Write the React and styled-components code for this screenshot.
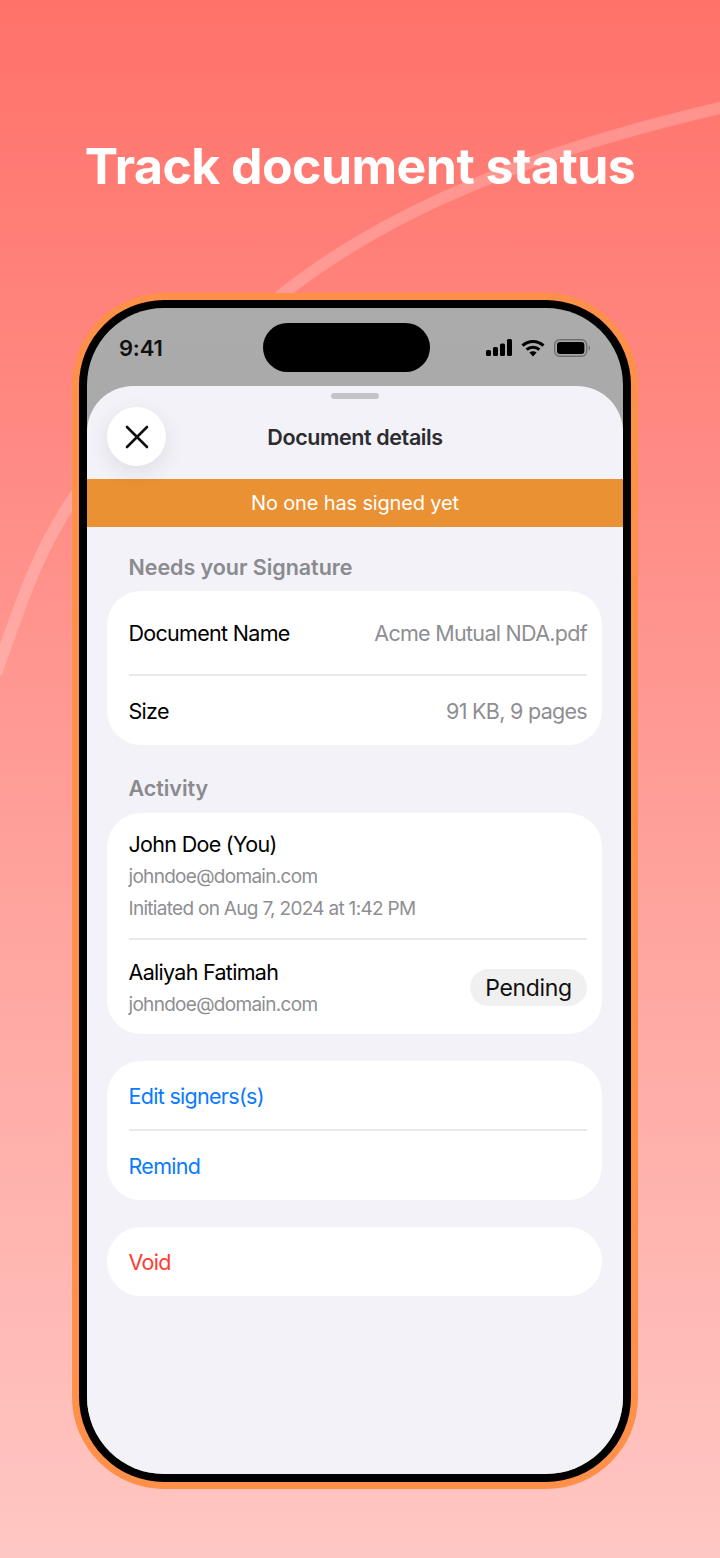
import React from "react";
import styled, { createGlobalStyle } from "styled-components";

const GlobalStyle = createGlobalStyle`
  html, body {
    margin: 0;
    padding: 0;
  }
  body {
    font-family: Inter, "Liberation Sans", sans-serif;
  }
`;

const Page = styled.div`
  position: relative;
  width: 720px;
  height: 1558px;
  overflow: hidden;
  display: flex;
  flex-direction: column;
  background: linear-gradient(180deg, #ff726a 0%, #ffc7c3 100%);
`;

const Swoosh = styled.svg`
  position: absolute;
  top: 0;
  left: 0;
`;

const Title = styled.h1`
  position: relative;
  margin: 136px 0 0;
  height: 157px;
  text-align: center;
  font-size: 50px;
  line-height: 60px;
  font-weight: 700;
  letter-spacing: -0.55px;
  color: #fff;
`;

const Phone = styled.div`
  position: relative;
  width: 566px;
  height: 1196px;
  margin-left: 72px;
  box-sizing: border-box;
  padding: 7px;
  border-radius: 92px;
  background: #ff9049;
`;

const Bezel = styled.div`
  height: 100%;
  box-sizing: border-box;
  padding: 8px;
  border-radius: 85px;
  background: #000;
`;

const Screen = styled.div`
  position: relative;
  height: 100%;
  border-radius: 77px;
  overflow: hidden;
  display: flex;
  flex-direction: column;
  background: linear-gradient(180deg, #ababab 0%, #9b9b9b 100%);
`;

const StatusBar = styled.div`
  height: 78px;
  flex-shrink: 0;
  box-sizing: border-box;
  padding: 21px 33px 0 32px;
  display: flex;
  justify-content: space-between;
  align-items: flex-start;
`;

const Clock = styled.span`
  font-size: 22px;
  line-height: 38px;
  font-weight: 600;
  letter-spacing: -0.2px;
  color: #111;
`;

const StatusIcons = styled.div`
  display: flex;
  align-items: center;
  gap: 9px;
  height: 38px;
`;

const Island = styled.div`
  position: absolute;
  top: 15px;
  left: 176px;
  width: 167px;
  height: 49px;
  border-radius: 25px;
  background: #000;
`;

const Sheet = styled.div`
  position: relative;
  flex: 1;
  display: flex;
  flex-direction: column;
  border-radius: 46px 46px 0 0;
  background: #f2f2f8;
`;

const Handle = styled.div`
  position: absolute;
  top: 7px;
  left: 244px;
  width: 48px;
  height: 6px;
  border-radius: 3px;
  background: #c4c4c8;
`;

const Header = styled.div`
  position: relative;
  height: 93px;
  display: flex;
  align-items: center;
  justify-content: center;
  padding-top: 9px;
  box-sizing: border-box;
`;

const HeaderTitle = styled.div`
  font-size: 21.5px;
  font-weight: 600;
  letter-spacing: -0.4px;
  color: #2b2b30;
`;

const CloseButton = styled.button`
  position: absolute;
  z-index: 1;
  top: 21px;
  left: 20px;
  width: 59px;
  height: 59px;
  padding: 0;
  border: none;
  border-radius: 50%;
  display: flex;
  align-items: center;
  justify-content: center;
  background: #fff;
  box-shadow: 0 6px 22px rgba(0, 0, 0, 0.09);
`;

const Banner = styled.div`
  height: 48px;
  display: flex;
  align-items: center;
  justify-content: center;
  font-size: 20px;
  letter-spacing: -0.15px;
  color: #fff;
  background: #e99133;
`;

const Body = styled.div`
  padding: 0 21px 0 20px;
  display: flex;
  flex-direction: column;
`;

const SectionLabel = styled.div`
  height: 26px;
  line-height: 26px;
  padding-left: 21.5px;
  font-size: 21.5px;
  font-weight: 600;
  letter-spacing: -0.05px;
  color: #8a8a8f;
  margin-top: ${(p) => p.$top}px;
  margin-bottom: ${(p) => p.$bottom}px;
`;

const Card = styled.div`
  display: flex;
  flex-direction: column;
  padding-left: 21.5px;
  padding-right: 15px;
  border-radius: 34px;
  background: #fff;
  margin-top: ${(p) => p.$top || 0}px;
`;

const Row = styled.div`
  box-sizing: border-box;
  height: ${(p) => p.$height}px;
  display: flex;
  align-items: center;
  justify-content: space-between;
  padding-top: ${(p) => p.$shift || 0}px;
  border-bottom: ${(p) => (p.$divider ? "2px solid #e9e9ec" : "none")};
`;

const RowLabel = styled.span`
  font-size: 21.5px;
  letter-spacing: -0.7px;
  color: ${(p) => p.$color || "#000"};
`;

const RowValue = styled.span`
  font-size: 21.5px;
  letter-spacing: -0.7px;
  color: #8e8e92;
`;

const Person = styled.div`
  box-sizing: border-box;
  height: ${(p) => p.$height}px;
  padding-top: ${(p) => p.$top}px;
  display: flex;
  justify-content: space-between;
  align-items: flex-start;
  border-bottom: ${(p) => (p.$divider ? "2px solid #e9e9ec" : "none")};
`;

const PersonInfo = styled.div`
  display: flex;
  flex-direction: column;
`;

const PersonName = styled.div`
  height: 32px;
  line-height: 32px;
  font-size: 21.5px;
  letter-spacing: -0.7px;
  color: #000;
`;

const PersonMeta = styled.div`
  height: 32px;
  line-height: 34px;
  font-size: 19px;
  letter-spacing: -0.7px;
  color: #8e8e92;
`;

const Badge = styled.span`
  margin-top: 13px;
  height: 37px;
  width: 117px;
  display: flex;
  align-items: center;
  justify-content: center;
  border-radius: 19px;
  font-size: 23px;
  letter-spacing: -0.35px;
  color: #111;
  background: #f0f0f0;
`;

const SignalIcon = () => (
  <svg width="26" height="18" viewBox="0 0 26 18">
    <rect x="0" y="11" width="5" height="6" rx="1.5" fill="#000" />
    <rect x="7" y="8" width="5" height="9" rx="1.5" fill="#000" />
    <rect x="14" y="4.5" width="5" height="12.5" rx="1.5" fill="#000" />
    <rect x="21" y="0" width="5" height="17" rx="1.5" fill="#000" />
  </svg>
);

const WifiIcon = () => (
  <svg width="24" height="18" viewBox="0 0 24 18" fill="none" stroke="#000" strokeWidth="3">
    <path d="M1.5 6.6C7.4 1 16.6 1 22.5 6.6" />
    <path d="M5.6 10.6c3.6-3.3 9.2-3.3 12.8 0" />
    <path d="M12 17.5l-3.6-4c2.1-1.7 5.1-1.7 7.2 0z" fill="#000" stroke="none" />
  </svg>
);

const BatteryIcon = () => (
  <svg width="36" height="18" viewBox="0 0 36 18">
    <rect x="0.7" y="0.7" width="32" height="16.6" rx="5" fill="none" stroke="#6e6e6e" strokeWidth="1.4" />
    <rect x="3" y="3" width="27.4" height="12" rx="3" fill="#000" />
    <path d="M34.6 6.5c1 .4 1.4 1.3 1.4 2.5s-.4 2.1-1.4 2.5z" fill="#6e6e6e" />
  </svg>
);

const CloseIcon = () => (
  <svg width="26" height="26" viewBox="0 0 26 26" fill="none" stroke="#111" strokeWidth="2.6" strokeLinecap="round">
    <path d="M3 3l20 20M23 3L3 23" />
  </svg>
);

export default function App() {
  return (
    <Page>
      <GlobalStyle />
      <Swoosh width="720" height="1558" viewBox="0 0 720 1558" fill="none">
        <path
          d="M724 107C560 145 400 200 280 296L262 312"
          stroke="rgba(255,255,255,0.2)"
          strokeWidth="12"
        />
        <path
          d="M90 476C42 535 20 605 -4 674"
          stroke="rgba(255,255,255,0.2)"
          strokeWidth="12"
        />
      </Swoosh>
      <Title>Track document status</Title>
      <Phone>
        <Bezel>
          <Screen>
            <StatusBar>
              <Clock>9:41</Clock>
              <StatusIcons>
                <SignalIcon />
                <WifiIcon />
                <BatteryIcon />
              </StatusIcons>
            </StatusBar>
            <Island />
            <Sheet>
              <Handle />
              <Header>
                <CloseButton aria-label="Close">
                  <CloseIcon />
                </CloseButton>
                <HeaderTitle>Document details</HeaderTitle>
              </Header>
              <Banner>No one has signed yet</Banner>
              <Body>
                <SectionLabel $top={27} $bottom={11}>Needs your Signature</SectionLabel>
                <Card>
                  <Row $height={85} $divider>
                    <RowLabel>Document Name</RowLabel>
                    <RowValue>Acme Mutual NDA.pdf</RowValue>
                  </Row>
                  <Row $height={69} $shift={1}>
                    <RowLabel>Size</RowLabel>
                    <RowValue>91 KB, 9 pages</RowValue>
                  </Row>
                </Card>
                <SectionLabel $top={30} $bottom={12}>Activity</SectionLabel>
                <Card>
                  <Person $height={127} $top={15} $divider>
                    <PersonInfo>
                      <PersonName>John Doe (You)</PersonName>
                      <PersonMeta>johndoe@domain.com</PersonMeta>
                      <PersonMeta>Initiated on Aug 7, 2024 at 1:42 PM</PersonMeta>
                    </PersonInfo>
                  </Person>
                  <Person $height={94} $top={16}>
                    <PersonInfo>
                      <PersonName>Aaliyah Fatimah</PersonName>
                      <PersonMeta>johndoe@domain.com</PersonMeta>
                    </PersonInfo>
                    <Badge>Pending</Badge>
                  </Person>
                </Card>
                <Card $top={27}>
                  <Row $height={70} $shift={2} $divider>
                    <RowLabel $color="#0a7aff">Edit signers(s)</RowLabel>
                  </Row>
                  <Row $height={69}>
                    <RowLabel $color="#0a7aff">Remind</RowLabel>
                  </Row>
                </Card>
                <Card $top={27}>
                  <Row $height={69}>
                    <RowLabel $color="#ff3b30">Void</RowLabel>
                  </Row>
                </Card>
              </Body>
            </Sheet>
          </Screen>
        </Bezel>
      </Phone>
    </Page>
  );
}
